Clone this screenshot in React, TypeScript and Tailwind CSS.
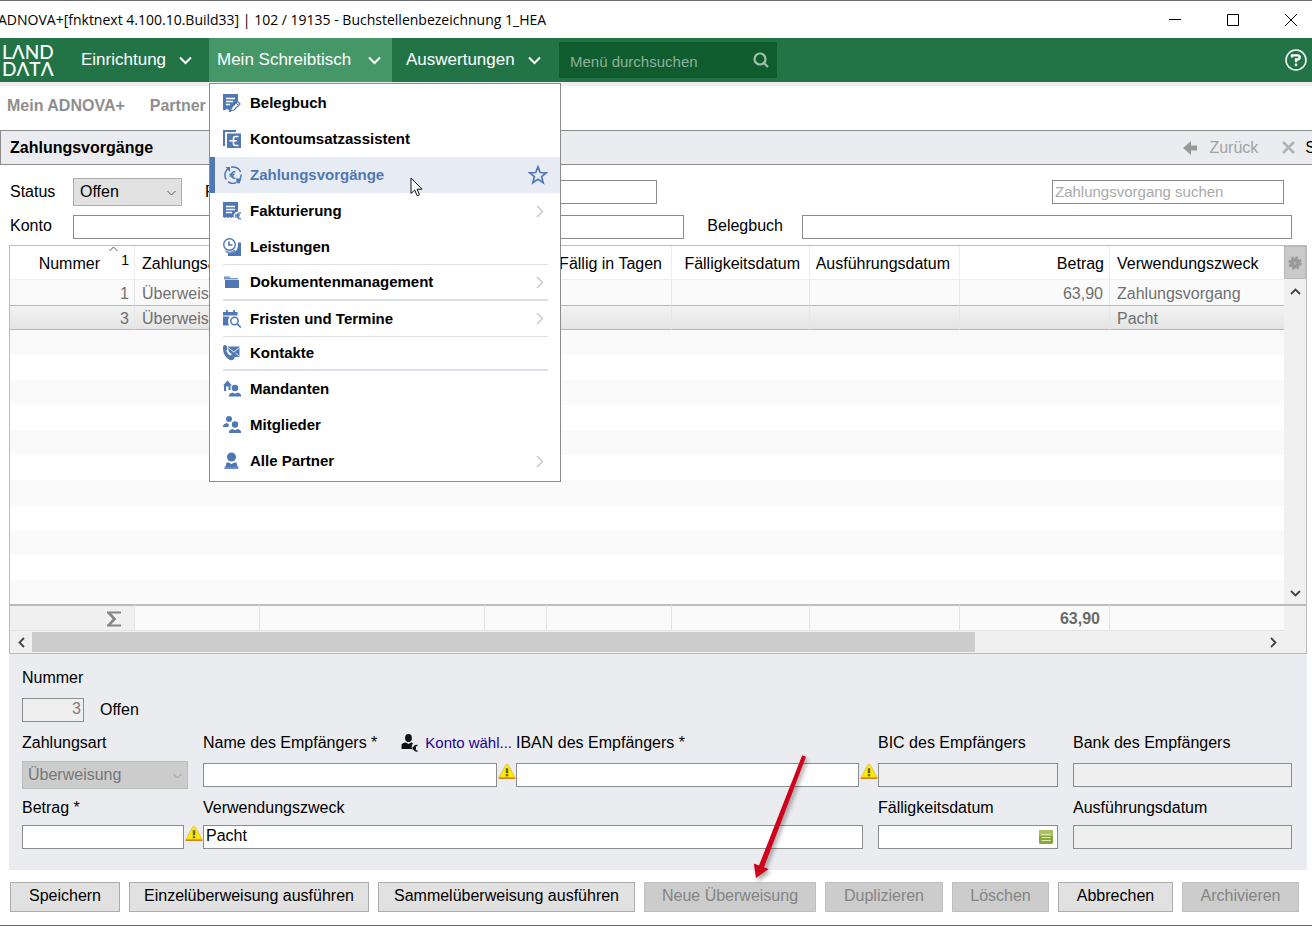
import type { ReactNode } from "react";

const SANS = "font-['Liberation_Sans',Arial,sans-serif]";

/* ---------- icons ---------- */

function Chevron({ className, d = "M1 1.5 6.5 7 12 1.5", w = 13, h = 9, sw = 2 }: { className?: string; d?: string; w?: number; h?: number; sw?: number }) {
  return (
    <svg className={className} width={w} height={h} viewBox={`0 0 ${w} ${h}`} fill="none" stroke="currentColor" strokeWidth={sw} aria-hidden="true">
      <path d={d} />
    </svg>
  );
}

function MenuIcon({ children }: { children: ReactNode }) {
  return (
    <svg className="shrink-0 text-[#5078b4]" width="18" height="18" viewBox="0 0 18 18" fill="currentColor" aria-hidden="true">
      {children}
    </svg>
  );
}

const icons: Record<string, ReactNode> = {
  beleg: (
    <>
      <path d="M0 0h15v7l-7 7-1 2H5.5l-1.5-1.3L2.5 16H0z" />
      <path d="M3 4.5h9M3 7.5h7M3 10.5h4" stroke="#fff" strokeWidth="1.3" />
      <path d="m8.500 13.500 6-6 2.500 2.500-6 6-3.300.8z" fill="#fff" stroke="currentColor" strokeWidth="1.2" />
      <path d="m13 9 2.500 2.500" stroke="currentColor" />
      <path d="M6 16h2v2H6z" />
    </>
  ),
  konto: (
    <>
      <path d="M0 0h13v2H2v14H0z" />
      <path d="M4 3.500h14V18H4z" />
      <path d="M15.500 6.500h-3q-2 0-2 2v5q0 2 2 2h3M6.500 10.700h7.500" stroke="#fff" strokeWidth="1.6" fill="none" />
    </>
  ),
  zahlung: (
    <>
      <path d="M2.300 13.500A8 8 0 0 1 4 2.600M7 1.200A8 8 0 0 1 16.600 6M17 8.500a8 8 0 0 1-2 6M12 16.800a8 8 0 0 1-8-1.200" stroke="currentColor" strokeWidth="1.5" fill="none" />
      <path d="M1.500 1H6v5L4.300 4.200zM12 12.500h5.500L15.500 17.500l-3-.5z" />
      <path d="M11.500 6q-3.800-1-4 3 .2 4 4 3M5.500 8.300h5M5.500 10h4.500" stroke="currentColor" strokeWidth="1.5" fill="none" />
    </>
  ),
  faktur: (
    <>
      <path d="M0 0h15v9.500q-4 1-4.500 4L11 16l-1.500-1L8 16l-1.500-1L5 16l-1.500-1L2 16l-2-1z" />
      <path d="M3 4.500h9M3 7.500h9M3 10.500h6" stroke="#fff" strokeWidth="1.3" />
      <path d="M18 11q-3.500-.8-3.800 2.700.3 3.700 3.800 3M12 13h5M12 14.800h4.500" stroke="currentColor" strokeWidth="1.3" fill="none" />
    </>
  ),
  leistung: (
    <>
      <path d="M15 4.500h3V18H5v-3q9.500 1.500 10-8z" />
      <circle cx="6.500" cy="6.500" r="5.800" fill="#fff" stroke="currentColor" strokeWidth="1.4" />
      <path d="M6 3.500V7h3.500" stroke="currentColor" strokeWidth="1.7" fill="none" />
      <path d="M2 12q5 3.500 9.500-.5l1.500 2q-5 4-10 1z" opacity=".8" />
    </>
  ),
  doku: (
    <>
      <path d="M1 3.500h5.500l1.300 1.500H15v1.500H1z" opacity=".75" />
      <path d="M2 7h14v8H2z" />
    </>
  ),
  frist: (
    <>
      <path d="M3 0h1.800v2h5.400V0H12v2h2.500v3.500H0V2h3z" />
      <path d="M0 6.500h6.500q-2.500 4-.5 9H0z" />
      <circle cx="11.500" cy="11" r="3.700" fill="none" stroke="currentColor" strokeWidth="1.5" />
      <path d="m14 13.800 3.800 3.700" stroke="currentColor" strokeWidth="1.6" />
    </>
  ),
  kontakt: (
    <>
      <path d="M4.500 2.500H16.500v10.500h-5L8 9.500 6 8z" />
      <path d="m5 3.500 5.800 4.500 5.700-4.500M12.500 9l4 3.500" stroke="#fff" strokeWidth=".9" fill="none" />
      <path d="M0 3q0-2 2-2l1.500.5L4.500 5 3.300 6.500Q4.500 10 7 11.500l1.800-1L11.500 12v2.500Q10 17 7 16-.5 12 0 3z" />
    </>
  ),
  mandant: (
    <>
      <path d="M0 5.500 4.500.5 9 5.500H7.500V10H5.500V6.500H3V11H1V5.500z" />
      <circle cx="12" cy="8" r="3.300" />
      <path d="M6 16.500v-1.700q1-2 3.500-2.300l2.500 1.300 2.500-1.300q2.500.3 3.500 2.300v1.700z" />
    </>
  ),
  mitglied: (
    <>
      <circle cx="6" cy="3" r="3" />
      <path d="M0 11V9.500Q1 7.500 3.500 7l2.300 1L5.500 11z" />
      <circle cx="12" cy="8.500" r="3.200" />
      <path d="M6 17v-1.700q1-2 3.500-2.300l2.500 1.300 2.500-1.300q2.500.3 3.500 2.300V17z" />
    </>
  ),
  partner: (
    <>
      <circle cx="8.500" cy="5" r="4.500" />
      <path d="M3.500 10.500h2l3 1.500 3-1.500h2l1 4.500h-12z" />
      <path d="M1.500 14.500h14V17h-14z" opacity=".85" />
    </>
  ),
};

function Warning() {
  return (
    <svg className="shrink-0" width="18" height="17" viewBox="0 0 18 17" role="img" aria-label="Pflichtfeld">
      <path d="M9 1.200Q9.800 1.200 10.300 2L17 14.500H1L7.700 2Q8.200 1.200 9 1.200z" fill="#fbe80c" stroke="#ecc24a" strokeWidth="1" strokeLinejoin="round" />
      <path d="M1.200 15.300h15.600" stroke="#cf8420" strokeWidth="1.600" strokeLinecap="round" />
      <path d="M9 5.300v5M9 11.300v2" stroke="#66621c" strokeWidth="2.400" />
    </svg>
  );
}

/* ---------- menu ---------- */

type Entry = { icon: string; label: string; sub?: boolean; line?: string; active?: boolean; h?: string };

const entries: Entry[] = [
  { icon: "beleg", label: "Belegbuch" },
  { icon: "konto", label: "Kontoumsatzassistent" },
  { icon: "zahlung", label: "Zahlungsvorgänge", active: true },
  { icon: "faktur", label: "Fakturierung", sub: true },
  { icon: "leistung", label: "Leistungen", line: "border-b" },
  { icon: "doku", label: "Dokumentenmanagement", sub: true, line: "border-b-2" },
  { icon: "frist", label: "Fristen und Termine", sub: true, line: "border-b" },
  { icon: "kontakt", label: "Kontakte", line: "border-b-2", h: "h-[34px]" },
  { icon: "mandant", label: "Mandanten" },
  { icon: "mitglied", label: "Mitglieder" },
  { icon: "partner", label: "Alle Partner", sub: true },
];

function DropMenu() {
  return (
    <ul className="absolute top-full left-0 z-20 mt-px w-[352px] border border-[#8c8c8c] bg-white pt-px pb-0.5 text-[15px] font-bold text-black">
      {entries.map((e) => (
        <li key={e.label} className={e.active ? "relative border-l-[5px] border-[#5078b4] bg-[#e7ecf4] pr-3 pl-[9px]" : "pr-3 pl-[13px]"}>
          <a href="#" className={`flex items-center border-[#dcdfe6] ${e.h ?? "h-9"} ${e.line ?? ""}`}>
            <MenuIcon>{icons[e.icon]}</MenuIcon>
            <span className={e.active ? "ml-2 text-[#5078b4]" : "ml-[9px]"}>{e.label}</span>
            {e.sub && <Chevron className="mr-1 ml-auto text-[#cccccc]" w={8} h={13} d="M1 1 6.500 6.500 1 12" sw={1.6} />}
            {e.active && (
              <svg className="ml-auto text-[#5078b4]" width="20" height="20" viewBox="0 0 20 20" fill="none" stroke="currentColor" strokeWidth="1.7" aria-hidden="true">
                <path d="m10 1.800 2.200 5.700 6.100.3-4.700 3.800 1.600 6.200L10 14.300l-5.200 3.500 1.600-6.200L1.700 7.800l6.100-.3z" />
              </svg>
            )}
          </a>
          {e.active && (
            <svg className="pointer-events-none absolute top-5 left-[195px]" width="13" height="20" viewBox="0 0 13 20" aria-hidden="true">
              <path d="M1 1v15.500l3.700-3.500 2.500 5.800 2.300-1-2.400-5.600H12z" fill="#fff" stroke="#111" strokeWidth="1" />
            </svg>
          )}
        </li>
      ))}
    </ul>
  );
}

/* ---------- table ---------- */

const columns = [
  { label: "Nummer", w: "w-[125px]" },
  { label: "Zahlungsart", w: "w-[125px]" },
  { label: "", w: "w-[225px]" },
  { label: "", w: "w-[62px]" },
  { label: "Fällig in Tagen", w: "w-[125px]" },
  { label: "Fälligkeitsdatum", w: "w-[138px]" },
  { label: "Ausführungsdatum", w: "w-[150px]" },
  { label: "Betrag", w: "w-[150px]" },
  { label: "Verwendungszweck", w: "" },
];

const headAlign = ["text-right pr-[34px]", "pl-[7px]", "", "", "text-right pr-[9px]", "text-right pr-[9px]", "text-right pr-[9px]", "text-right pr-[5px]", "pl-[7px]"];
const bodyAlign = ["text-right pr-[5px]", "pl-[7px]", "", "", "", "", "", "text-right pr-1.5", "pl-[7px]"];

const rows = [
  ["1", "Überweisung", "", "", "", "", "", "63,90", "Zahlungsvorgang"],
  ["3", "Überweisung", "", "", "", "", "", "", "Pacht"],
];
const emptyRows = Array.from({ length: 11 }, (_, i) => i);

function PaymentsTable() {
  return (
    <div className="ml-[9px] mr-[5px] border border-[#bcbcbc]">
      <div className="flex">
        <table className="min-w-0 flex-1 table-fixed border-separate border-spacing-0 text-base leading-5">
          <thead>
            <tr>
              {columns.map((c, i) => (
                <th key={i} scope="col" className={`relative h-[34px] overflow-hidden border-b border-[#ededed] p-0 pt-0.5 text-left font-normal whitespace-nowrap ${c.w} ${i < 8 ? "border-r" : ""} ${headAlign[i]}`}>
                  {c.label}
                  {i === 0 && (
                    <>
                      <Chevron className="absolute top-0 right-4 text-[#555]" w={9} h={6} d="M.5 5 4.500 1 8.500 5" sw={1} />
                      <span className="absolute top-1 right-[5px] text-sm">1</span>
                    </>
                  )}
                </th>
              ))}
            </tr>
          </thead>
          <tbody className="text-[#707070]">
            {rows.map((r, n) => (
              <tr key={n} className={n === 1 ? "bg-linear-to-b from-[#f3f3f3] to-[#e4e4e4]" : "bg-[#fafafa]"}>
                {r.map((v, i) => (
                  <td key={i} className={`h-[25px] overflow-hidden p-0 pt-0.5 whitespace-nowrap ${bodyAlign[i]} ${i < 8 ? "border-r border-r-[#e6e6e6]" : ""} ${n === 1 ? "border-y border-y-[#b8b8b8]" : ""}`}>
                    {v}
                  </td>
                ))}
              </tr>
            ))}
            {emptyRows.map((n) => (
              <tr key={n} className="odd:bg-[#fafafa]">
                <td colSpan={9} className={n === 10 ? "h-6 p-0" : "h-[25px] p-0"} />
              </tr>
            ))}
          </tbody>
          <tfoot className="bg-[#fafafa] font-bold text-[#6a6a6a]">
            <tr>
              {columns.map((_, i) => (
                <td key={i} className={`h-[27px] border-t-2 border-b border-t-[#bcbcbc] border-b-[#e4e4e4] p-0 pt-0.5 ${i === 0 ? "bg-[#f0f0f0] pr-[13px]" : ""} ${i === 7 ? "pr-[9px] text-right" : ""} ${i < 8 ? "border-r border-r-[#e4e4e4]" : ""}`}>
                  {i === 0 && (
                    <svg className="ml-auto" width="14" height="16" viewBox="0 0 14 16" fill="none" stroke="#868686" aria-label="Summe" role="img">
                      <path d="M0 1.500h14M0 14.500h14" strokeWidth="2.200" />
                      <path d="M1.500 1.500 7.500 8l-6 6.500" strokeWidth="2.600" />
                    </svg>
                  )}
                  {i === 7 && "63,90"}
                </td>
              ))}
            </tr>
          </tfoot>
        </table>
        <div className="flex w-[22px] flex-col bg-[#f0f0f0] text-[#444]">
          <button aria-label="Spalten einstellen" className="flex h-[33px] items-center justify-center border border-[#b8b8b8] bg-[#cacaca]">
            <svg width="14" height="14" viewBox="0 0 14 14" aria-hidden="true">
              <circle cx="7" cy="7" r="5.300" fill="#9a9a9a" />
              <circle cx="7" cy="7" r="5.800" fill="none" stroke="#9a9a9a" strokeWidth="1.800" strokeDasharray="2.500 2.050" />
              <circle cx="7" cy="7" r="1.500" fill="#b0b0b0" />
            </svg>
          </button>
          <button aria-label="Nach oben" className="flex h-6 items-center justify-center">
            <Chevron w={11} h={7} d="M1 6 5.500 1.500 10 6" sw={1.8} />
          </button>
          <button aria-label="Nach unten" className="mt-auto flex h-6 items-center justify-center border-b-2 border-[#bcbcbc]">
            <Chevron w={11} h={7} d="M1 1 5.500 5.500 10 1" sw={1.8} />
          </button>
          <div className="h-[25px]" />
        </div>
      </div>
      <div className="flex h-[22px] items-center bg-[#f0f0f0] pr-[22px] text-[#444]">
        <button aria-label="Nach links" className="flex h-5 w-[22px] items-center justify-center">
          <Chevron w={7} h={11} d="M6 1 1.500 5.500 6 10" sw={1.8} />
        </button>
        <div className="flex h-5 flex-1">
          <div className="flex-[943] bg-[#cdcdcd]" />
          <div className="flex-[287]" />
        </div>
        <button aria-label="Nach rechts" className="flex h-5 w-[22px] items-center justify-center">
          <Chevron w={7} h={11} d="M1 1 5.500 5.500 1 10" sw={1.8} />
        </button>
      </div>
    </div>
  );
}

/* ---------- form ---------- */

const box = "h-6 min-w-0 border border-[#8c8c8c] bg-white px-0.5 pb-0.5";
const boxOff = "h-6 min-w-0 border border-[#8c8c8c] bg-[#efefef] px-0.5 pb-0.5";

type FieldProps = { id: string; label: string; off?: boolean; warn?: boolean; low?: boolean; value?: string; span?: boolean; extra?: ReactNode; inner?: ReactNode };

function Field({ id, label, off, warn, low, value, span, extra, inner }: FieldProps) {
  return (
    <div className={span ? "col-span-2" : ""}>
      <div className="flex h-8 items-center whitespace-nowrap">
        <label htmlFor={id}>{label}</label>
        {extra}
      </div>
      <div className={`relative flex h-[33px] items-start ${low ? "pt-1" : "pt-px"} ${warn ? "" : "pr-[15px]"}`}>
        <input id={id} disabled={off} defaultValue={value} className={`${off ? boxOff : box} flex-1`} />
        {warn && (
          <span className="pl-px">
            <Warning />
          </span>
        )}
        {inner}
      </div>
    </div>
  );
}

function DetailForm() {
  return (
    <form className="mr-[5px] ml-[9px] bg-[#eaecf0] pt-2 pb-[13px] pl-[13px]">
      <div className="flex h-8 items-center">
        <label htmlFor="nr">Nummer</label>
      </div>
      <div className="flex h-[33px] items-center pb-0.5">
        <input id="nr" disabled defaultValue="3" className={`${boxOff} w-[62px] text-right text-[#808080]`} />
        <span className="ml-4">Offen</span>
      </div>
      <div className="grid grid-cols-[181px_313fr_362fr_195px_234px]">
        <div>
          <div className="flex h-8 items-center">
            <label htmlFor="art">Zahlungsart</label>
          </div>
          <div className="relative mt-0.5 w-[166px]">
            <select id="art" disabled className="h-7 w-full appearance-none border border-[#bdbdbd] bg-[#cccccc] px-[5px] text-[#777] opacity-100">
              <option>Überweisung</option>
            </select>
            <Chevron className="pointer-events-none absolute top-3 right-1.5 text-[#999]" w={9} h={6} d="M.5 1 4.500 5 8.500 1" sw={1} />
          </div>
        </div>
        <Field
          id="name"
          label="Name des Empfängers *"
          warn
          low
          extra={
            <a href="#" className="mr-1 ml-auto flex items-center gap-1.5 text-[15px] text-[#1a009c]">
              <svg width="18" height="20" viewBox="0 0 18 20" fill="#111" aria-hidden="true">
                <ellipse cx="7.500" cy="5" rx="3.400" ry="4" />
                <path d="M.5 16v-4q0-2 4.500-2.500l2.500 1.500L10 9.500q1.500 0 2 1-2 2-1 5.500z" />
                <path d="M16.500 12.500q-3.300-.5-3.500 2.500.2 3.500 3.500 3M11.500 14.500H15M11.500 16H15" fill="none" stroke="#111" strokeWidth="1.4" />
              </svg>
              Konto wähl...
            </a>
          }
        />
        <Field id="iban" label="IBAN des Empfängers *" warn low />
        <Field id="bic" label="BIC des Empfängers" off low />
        <Field id="bank" label="Bank des Empfängers" off low />
        <Field id="betrag" label="Betrag *" warn />
        <Field id="zweck" label="Verwendungszweck" value="Pacht" span />
        <Field
          id="faellig"
          label="Fälligkeitsdatum"
          inner={
            <button type="button" aria-label="Kalender" className="absolute top-1.5 right-5">
              <svg width="14" height="14" viewBox="0 0 14 14" aria-hidden="true">
                <rect width="14" height="14" rx="1.500" fill="#8aa63a" />
                <rect width="14" height="6" rx="1.500" fill="#a9c063" />
                <path d="M2.500 4.500h9M2.500 7.500h9M2.500 10.500h9" stroke="#dfeabb" strokeWidth="1.2" />
              </svg>
            </button>
          }
        />
        <Field id="ausf" label="Ausführungsdatum" off />
      </div>
    </form>
  );
}

const actions = [
  { label: "Speichern", w: "w-[110px]" },
  { label: "Einzelüberweisung ausführen", w: "w-[240px]" },
  { label: "Sammelüberweisung ausführen", w: "w-[257px]" },
  { label: "Neue Überweisung", w: "w-[172px]", off: true, arrow: true },
  { label: "Duplizieren", w: "w-[118px]", off: true },
  { label: "Löschen", w: "w-[97px]", off: true },
  { label: "Abbrechen", w: "w-[115px]" },
  { label: "Archivieren", w: "w-[117px]", off: true },
];

/* ---------- page ---------- */

export default function App() {
  return (
    <div className={`overflow-hidden border-y border-[#6b6b6b] bg-white text-base leading-5 text-black ${SANS}`}>
      <div className="flex h-[37px] items-center">
        <h1 className="-ml-0.5 text-sm whitespace-nowrap font-['Open_Sans','Noto_Sans',sans-serif]">ADNOVA+[fnktnext 4.100.10.Build33] | 102 / 19135 - Buchstellenbezeichnung 1_HEA</h1>
        <div className="mr-[15px] ml-auto flex gap-[46px]">
          <button aria-label="Minimieren">
            <svg width="12" height="12" viewBox="0 0 12 12" stroke="#000"><path d="M0 5.500h12" /></svg>
          </button>
          <button aria-label="Maximieren">
            <svg width="12" height="12" viewBox="0 0 12 12" stroke="#000" fill="none"><path d="M.5.5h11v11H.5z" /></svg>
          </button>
          <button aria-label="Schließen">
            <svg width="12" height="12" viewBox="0 0 12 12" stroke="#000"><path d="m0 0 12 12M12 0 0 12" /></svg>
          </button>
        </div>
      </div>

      <nav className="flex h-11 items-stretch bg-[#227447] text-[17px] text-white">
        <div className="flex w-[73px] flex-col justify-center pl-0.5 text-[19px] leading-[17px] font-medium font-['Lato','Open_Sans',sans-serif]">
          <span>LΛND</span>
          <span>DΛTΛ</span>
        </div>
        <button className="flex w-[136px] items-center justify-between pr-[17px] pl-2">
          Einrichtung <Chevron />
        </button>
        <div className="relative flex">
          <button className="flex w-[183px] items-center justify-between bg-[#459768] pr-[11px] pl-2">
            Mein Schreibtisch <Chevron />
          </button>
          <DropMenu />
        </div>
        <button className="flex w-[167px] items-center justify-between pr-[18px] pl-3.5">
          Auswertungen <Chevron />
        </button>
        <div className="my-1 flex w-[218px] items-center bg-[#0f5c2f] pr-2 pl-[11px]">
          <input aria-label="Menü durchsuchen" placeholder="Menü durchsuchen" className="w-full min-w-0 bg-transparent pt-1 text-[15px] placeholder:text-[#8fb09c]" />
          <svg className="shrink-0" width="16" height="16" viewBox="0 0 16 16" fill="none" stroke="#a3c0ad" strokeWidth="2.2" aria-hidden="true">
            <circle cx="7" cy="7" r="5.500" />
            <path d="m10.500 10.500 4.500 4.500" />
          </svg>
        </div>
        <button aria-label="Hilfe" className="mr-[5px] ml-auto">
          <svg width="22" height="22" viewBox="0 0 22 22" fill="none" stroke="#fff" aria-hidden="true">
            <circle cx="11" cy="11" r="10" strokeWidth="1.5" />
            <path d="M7 8.500V6.300h5.500q2.200 0 2.200 2t-2.200 2.200H11v2.800" strokeWidth="2.3" />
            <path d="M9.800 15.800h2.400" strokeWidth="2.4" />
          </svg>
        </button>
      </nav>

      <div className="flex h-12 items-center gap-[25px] border-t-4 border-[#eeeeee] pb-1 pl-[7px] font-bold text-[#8e8e8e]">
        <a href="#">Mein ADNOVA+</a>
        <a href="#">Partner</a>
      </div>

      <header className="flex h-[35px] items-center border border-r-0 border-[#8c8c8c] bg-[#eaecf0] pl-[9px]">
        <h2 className="font-bold">Zahlungsvorgänge</h2>
        <div className="-mr-1 ml-auto flex items-center">
          <button disabled className="flex items-center gap-3 text-[#a3a3a3]">
            <svg width="14" height="14" viewBox="0 0 14 14" fill="#999" aria-hidden="true">
              <path d="M0 7 8 0v4.500h6v5H8V14z" />
            </svg>
            Zurück
          </button>
          <button disabled aria-label="Schließen" className="ml-6">
            <svg width="13" height="13" viewBox="0 0 13 13" stroke="#b3b3b3" strokeWidth="2.5" aria-hidden="true">
              <path d="m1 1 11 11M12 1 1 12" />
            </svg>
          </button>
          <span className="ml-2.5">S</span>
        </div>
      </header>

      <div className="flex h-[54px] items-center pl-2.5 pr-7">
        <label htmlFor="status" className="w-[63px]">Status</label>
        <div className="relative">
          <select id="status" className="h-7 w-[109px] appearance-none border border-[#adadad] bg-[#e1e1e1] px-1.5">
            <option>Offen</option>
          </select>
          <Chevron className="pointer-events-none absolute top-3 right-1.5 text-[#555]" w={9} h={6} d="M.5 1 4.500 5 8.500 1" sw={1} />
        </div>
        <label htmlFor="f" className="ml-[23px] w-[55px]">F</label>
        <input id="f" className={`${box} w-[397px]`} />
        <input aria-label="Zahlungsvorgang suchen" placeholder="Zahlungsvorgang suchen" className={`${box} ml-auto w-[232px] text-[15px] placeholder:text-[#a9a9a9]`} />
      </div>
      <div className="-mt-1 flex items-center pb-1.5 pl-2.5 pr-5">
        <label htmlFor="konto" className="w-[63px] pb-0.5">Konto</label>
        <input id="konto" className={`${box} flex-[612]`} />
        <label htmlFor="bb" className="ml-[23px] w-[95px] pb-0.5">Belegbuch</label>
        <input id="bb" className={`${box} flex-[489]`} />
      </div>

      <PaymentsTable />
      <DetailForm />

      <div className="flex gap-[9px] px-2.5 pt-3 pb-[13px]">
        {actions.map((a) => (
          <div key={a.label} className="relative">
            <button disabled={a.off} className={`h-[30px] border pb-0.5 whitespace-nowrap ${a.w} ${a.off ? "border-[#bfbfbf] bg-[#cccccc] text-[#848484]" : "border-[#adadad] bg-[#e1e1e1]"}`}>
              {a.label}
            </button>
            {a.arrow && (
              <svg className="pointer-events-none absolute bottom-8 left-[104px] drop-shadow-[2px_3px_2px_rgba(0,0,0,0.35)]" width="62" height="126" viewBox="0 0 62 126" fill="#d0021b" aria-hidden="true">
                <path d="M54.200 1.300 58 2.700 16 113.300 20.500 115 8 124 5.800 109.500 11 111.500z" />
              </svg>
            )}
          </div>
        ))}
      </div>
    </div>
  );
}
